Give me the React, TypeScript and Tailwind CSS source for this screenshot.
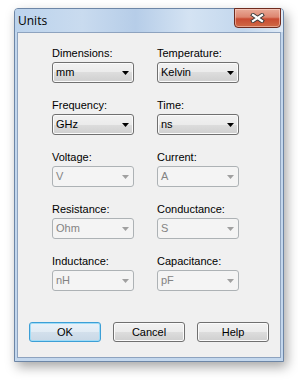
import React from "react";

type Field = { label: string; value: string; enabled: boolean };

const rows: [Field, Field][] = [
  [
    { label: "Dimensions:", value: "mm", enabled: true },
    { label: "Temperature:", value: "Kelvin", enabled: true },
  ],
  [
    { label: "Frequency:", value: "GHz", enabled: true },
    { label: "Time:", value: "ns", enabled: true },
  ],
  [
    { label: "Voltage:", value: "V", enabled: false },
    { label: "Current:", value: "A", enabled: false },
  ],
  [
    { label: "Resistance:", value: "Ohm", enabled: false },
    { label: "Conductance:", value: "S", enabled: false },
  ],
  [
    { label: "Inductance:", value: "nH", enabled: false },
    { label: "Capacitance:", value: "pF", enabled: false },
  ],
];

function Combo({ field }: { field: Field }) {
  return (
    <div className="flex flex-col w-[82px]">
      <span className="h-[13px] leading-[13px] mb-[2px] text-black whitespace-nowrap">
        {field.label}
      </span>
      {field.enabled ? (
        <div className="h-[21px] flex items-center justify-between pl-[3px] pr-[4px] rounded-[3px] border border-[#707070] bg-[linear-gradient(to_bottom,#f2f2f2_0%,#ebebeb_50%,#dddddd_50%,#cfcfcf_100%)] shadow-[inset_0_0_0_1px_#fbfbfb]">
          <span className="text-black">{field.value}</span>
          <svg width="7" height="4" viewBox="0 0 7 4">
            <path d="M0 0 H7 L3.5 4 Z" fill="#000" />
          </svg>
        </div>
      ) : (
        <div className="h-[21px] flex items-center justify-between pl-[3px] pr-[4px] rounded-[3px] border border-[#adb2b5] bg-[#f4f4f4]">
          <span className="text-[#838383]">{field.value}</span>
          <svg width="7" height="4" viewBox="0 0 7 4">
            <path d="M0 0 H7 L3.5 4 Z" fill="#a0a0a0" />
          </svg>
        </div>
      )}
    </div>
  );
}

function Button({ label, primary }: { label: string; primary?: boolean }) {
  return (
    <button
      className={`w-[72px] h-[20px] rounded-[3px] text-black leading-none ${
        primary
          ? "border border-[#3c9fd6] bg-[linear-gradient(to_bottom,#eaf2f9_0%,#e1ebf4_50%,#d3e0ec_50%,#c9d8e6_100%)] shadow-[inset_0_0_0_1px_#9fdcf7]"
          : "border border-[#707070] bg-[linear-gradient(to_bottom,#f2f2f2_0%,#ebebeb_50%,#dddddd_50%,#cfcfcf_100%)] shadow-[inset_0_0_0_1px_#fbfbfb]"
      }`}
    >
      {label}
    </button>
  );
}

export default function App() {
  return (
    <div
      className="w-[298px] h-[383px] bg-white pt-[8px] pl-[14px] text-[11px]"
      style={{ fontFamily: '"Liberation Sans", Arial, sans-serif' }}
    >
      <div className="relative w-[270px] h-[354px] flex flex-col rounded-t-[4px] border border-[#6d86a6] bg-[#c3d7ed] shadow-[3px_5px_12px_rgba(0,0,0,0.35)]">
        {/* Title bar */}
        <div className="h-[23px] flex items-center pl-[3px] rounded-t-[3px] bg-[linear-gradient(to_right,#bcd3ec_0%,#c9dbef_25%,#b6cde8_45%,#d4e3f3_65%,#c3d7ed_85%,#dfeaf6_100%)]">
          <span className="text-[12px] text-black" style={{ fontFamily: '"Open Sans", "Liberation Sans", sans-serif' }}>
            Units
          </span>
        </div>
        {/* Close button */}
        <div className="absolute top-[-1px] right-[2px] w-[47px] h-[20px] flex items-center justify-center rounded-b-[4px] border border-[#6e2b1f] bg-[linear-gradient(to_bottom,#e9aa98_0%,#dd8670_45%,#c94b32_55%,#cf6a46_100%)] shadow-[inset_0_0_0_1px_rgba(255,220,210,0.5)]">
          <svg width="15" height="10" viewBox="0 0 15 10">
            <path d="M3 2 L12 8 M12 2 L3 8" stroke="#3a3a3a" strokeWidth="4" strokeLinecap="square" />
            <path d="M3 2 L12 8 M12 2 L3 8" stroke="#ffffff" strokeWidth="2.2" strokeLinecap="square" />
          </svg>
        </div>
        {/* Client area */}
        <div className="mx-[2px] mb-[3px] flex-1 flex flex-col border border-[#8ea3bf] bg-[#f0f0f0]">
          <div className="flex flex-col gap-[16px] pt-[14px] pl-[34px]">
            {rows.map(([a, b]) => (
              <div key={a.label} className="flex gap-[23px]">
                <Combo field={a} />
                <Combo field={b} />
              </div>
            ))}
          </div>
          <div className="mt-auto mb-[15px] flex justify-center gap-[12px]">
            <Button label="OK" primary />
            <Button label="Cancel" />
            <Button label="Help" />
          </div>
        </div>
      </div>
    </div>
  );
}
